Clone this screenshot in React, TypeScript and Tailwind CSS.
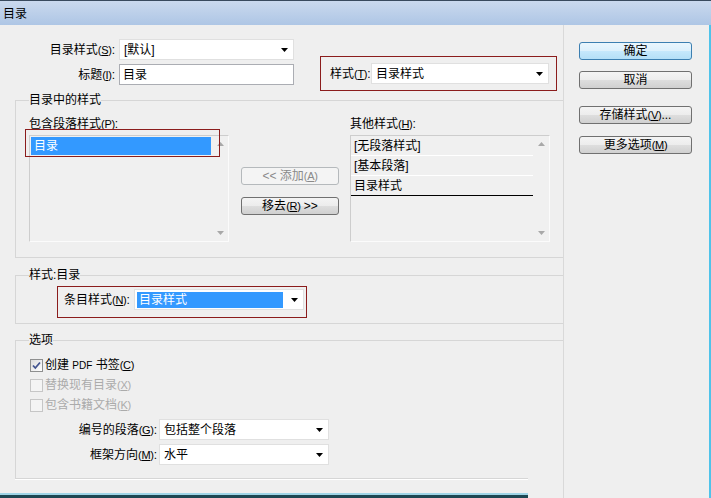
import type { ReactNode } from "react";
import clsx from "clsx";

function Hot({ k }: { k: string }) {
  return (
    <span className="text-[11px] tracking-[-0.3px]">
      (<span className="underline underline-offset-1">{k}</span>)
    </span>
  );
}

function Caret() {
  return (
    <svg width="7" height="4" viewBox="0 0 7 4" className="shrink-0" aria-hidden>
      <path d="M0 0h7L3.5 4z" fill="#000" />
    </svg>
  );
}

function ScrollArrow({ up }: { up?: boolean }) {
  return (
    <svg width="7" height="4" viewBox="0 0 7 4" aria-hidden>
      <path d={up ? "M3.5 0L7 4H0z" : "M0 0h7L3.5 4z"} fill="#a8a8a8" />
    </svg>
  );
}

function Dropdown({
  value,
  className,
  selected,
}: {
  value: string;
  className: string;
  selected?: boolean;
}) {
  return (
    <div
      className={clsx(
        "flex h-[21px] items-center border border-[#e0e0e0] bg-white pl-[2px] pr-[5px]",
        className,
      )}
    >
      <span
        className={clsx(
          "flex h-[16px] flex-1 items-center pl-[2px] leading-[14px]",
          selected ? "mr-[8px] bg-[#3399ff] text-white" : "",
        )}
      >
        {value}
      </span>
      <Caret />
    </div>
  );
}

type BtnVariant = "normal" | "default" | "disabled";

function Btn({
  children,
  variant = "normal",
  className,
}: {
  children: ReactNode;
  variant?: BtnVariant;
  className?: string;
}) {
  return (
    <button
      type="button"
      className={clsx(
        "flex h-[18px] items-center justify-center rounded-[3px] border text-[12px] leading-[14px] whitespace-pre",
        variant === "normal" &&
          "border-[#707070] bg-[linear-gradient(#f4f4f4,#ececec_50%,#dedede_50%,#d0d0d0)] text-black",
        variant === "default" &&
          "border-[#3c7fb1] bg-[linear-gradient(#eaf6fd,#dcf0fc_50%,#c6e8fc_50%,#b4dff7)] text-black",
        variant === "disabled" && "border-[#b5b9bc] bg-[#f4f4f4] text-[#8a8a8a]",
        className,
      )}
    >
      {children}
    </button>
  );
}

function Check({ label, checked, disabled }: { label: ReactNode; checked?: boolean; disabled?: boolean }) {
  return (
    <div className="flex h-[20px] items-center">
      <span
        className={clsx(
          "ml-[1px] flex h-[13px] w-[13px] items-center justify-center border",
          disabled ? "border-[#c6c6c6] bg-[#f4f4f4]" : "border-[#8e8f8f] bg-[linear-gradient(135deg,#dcdcdc,#ffffff)]",
        )}
      >
        {checked && (
          <svg width="9" height="9" viewBox="0 0 9 9" aria-hidden>
            <path d="M1 4.5l2.3 2.5L8 1.5" fill="none" stroke="#42538f" strokeWidth="1.8" />
          </svg>
        )}
      </span>
      <span className={clsx("ml-[2px] leading-[14px]", disabled ? "text-[#ababab]" : "text-black")}>{label}</span>
    </div>
  );
}

function ListBox({ children, inset }: { children: ReactNode; inset?: boolean }) {
  return (
    <div className="flex h-[107px] w-[200px] border border-[#cdcdcd] border-r-[#fbfbfb] border-b-[#fbfbfb] bg-[#f0f0f0]">
      <div className={clsx("flex-1 pt-[1px]", inset ? "px-[1px]" : "")}>{children}</div>
      <div className="flex w-[16px] flex-col items-center justify-between pt-[6px] pb-[6px]">
        <ScrollArrow up />
        <ScrollArrow />
      </div>
    </div>
  );
}

export default function App() {
  return (
    <div className="flex h-[498px] w-[711px] flex-col overflow-hidden bg-[#efefef] font-['Liberation_Sans','Noto_Sans_CJK_SC',sans-serif] text-[12px] leading-[14px] text-black">
      {/* title bar */}
      <div className="flex h-[25px] shrink-0 items-center border-t border-[#394a5e] bg-[linear-gradient(#cad9ee,#aec6e5)] pl-[3px] pt-[2px] text-[12px]">
        目录
      </div>

      <div className="flex flex-1">
        {/* left part */}
        <div className="flex w-[564px] flex-col border-r border-[#d9d9d9]">
          <div className="flex items-start pt-[14px]">
            <div className="flex flex-col gap-[4px]">
              <div className="flex h-[21px] items-center">
                <span className="w-[115px] text-right">
                  目录样式<Hot k="S" />:
                </span>
                <Dropdown value="[默认]" className="ml-[4px] w-[175px]" />
              </div>
              <div className="flex h-[21px] items-center">
                <span className="w-[115px] text-right">
                  标题<Hot k="I" />:
                </span>
                <div className="ml-[4px] flex h-[21px] w-[175px] items-center border border-[#abadb3] bg-white pl-[3px]">
                  目录
                </div>
              </div>
            </div>
            <div className="ml-[26px] mt-[17px] flex h-[35px] w-[237px] items-center border border-[#8b1c1c] pl-[9px] pr-[7px]">
              <span>
                样式<Hot k="T" />:
              </span>
              <Dropdown value="目录样式" className="ml-auto w-[178px]" />
            </div>
          </div>

          {/* 目录中的样式 */}
          <fieldset className="ml-[15px] mt-[2px] border border-r-0 border-[#d6d6d6] px-[13px] pt-[10px] pb-[15px]">
            <legend className="leading-[14px]">目录中的样式</legend>
            <div className="flex">
              <div className="flex flex-col">
                <span>
                  包含段落样式<Hot k="P" />:
                </span>
                <div className="relative mt-[4px]">
                  <ListBox inset>
                    <div className="flex h-[18px] items-center bg-[#3399ff] pl-[3px] text-white">目录</div>
                  </ListBox>
                  <div className="absolute -left-[4px] -top-[6px] h-[28px] w-[195px] border border-[#8b1c1c]" />
                </div>
              </div>
              <div className="ml-[12px] mt-[50px] flex flex-col">
                <Btn variant="disabled" className="w-[98px]">
                  {"<< 添加"}
                  <Hot k="A" />
                </Btn>
                <Btn className="mt-[12px] w-[98px]">
                  移去
                  <Hot k="R" />
                  {" >>"}
                </Btn>
              </div>
              <div className="ml-[11px] flex flex-col">
                <span>
                  其他样式<Hot k="H" />:
                </span>
                <div className="mt-[4px]">
                  <ListBox>
                    <div className="flex h-[19px] items-center border-b border-white pl-[3px]">[无段落样式]</div>
                    <div className="flex h-[20px] items-center border-b border-white pl-[3px]">[基本段落]</div>
                    <div className="flex h-[20px] items-center border-b border-black pl-[3px]">目录样式</div>
                  </ListBox>
                </div>
              </div>
            </div>
          </fieldset>

          {/* 样式:目录 */}
          <fieldset className="ml-[15px] mt-[10px] border border-r-0 border-[#d6d6d6] px-[13px] pt-[4px] pb-[5px]">
            <legend className="leading-[14px]">样式:目录</legend>
            <div className="ml-[28px] flex w-[250px] items-start border border-[#8b1c1c] pl-[6px] pr-[2px] pt-[2px] pb-[7px]">
              <span className="flex h-[21px] items-center">
                条目样式<Hot k="N" />:
              </span>
              <Dropdown value="目录样式" selected className="ml-auto w-[170px]" />
            </div>
          </fieldset>

          {/* 选项 */}
          <fieldset className="ml-[15px] mt-[9px] border border-r-0 border-b-0 border-[#d6d6d6] px-[13px] pt-[8px] pb-[13px]">
            <legend className="leading-[14px]">选项</legend>
            <Check
              checked
              label={
                <>
                  创建 <span className="text-[10px]">PDF</span> 书签<Hot k="C" />
                </>
              }
            />
            <Check disabled label={<>替换现有目录<Hot k="X" /></>} />
            <Check disabled label={<>包含书籍文档<Hot k="K" /></>} />
            <div className="mt-[4px] flex h-[21px] items-center">
              <span className="w-[128px] text-right">
                编号的段落<Hot k="G" />:
              </span>
              <Dropdown value="包括整个段落" className="ml-[2px] w-[170px]" />
            </div>
            <div className="mt-[4px] flex h-[21px] items-center">
              <span className="w-[128px] text-right">
                框架方向<Hot k="M" />:
              </span>
              <Dropdown value="水平" className="ml-[2px] w-[170px]" />
            </div>
          </fieldset>
          <div className="ml-[15px] h-[2px] w-[513px] border-t border-[#d6d6d6] border-b border-b-white" />

          <div className="mt-auto h-[5px] w-[528px] border-t-2 border-[#9fd5e7] bg-[#1d4753]" />
        </div>

        {/* right buttons */}
        <div className="flex flex-1 flex-col pl-[15px] pt-[17px]">
          <Btn variant="default" className="w-[113px]">确定</Btn>
          <Btn className="mt-[11px] w-[113px]">取消</Btn>
          <Btn className="mt-[17px] w-[113px]">
            存储样式<Hot k="V" />...
          </Btn>
          <Btn className="mt-[12px] w-[113px]">
            更多选项<Hot k="M" />
          </Btn>
        </div>

        <div className="w-[2px] bg-[#4fc3ea]" />
      </div>
    </div>
  );
}
